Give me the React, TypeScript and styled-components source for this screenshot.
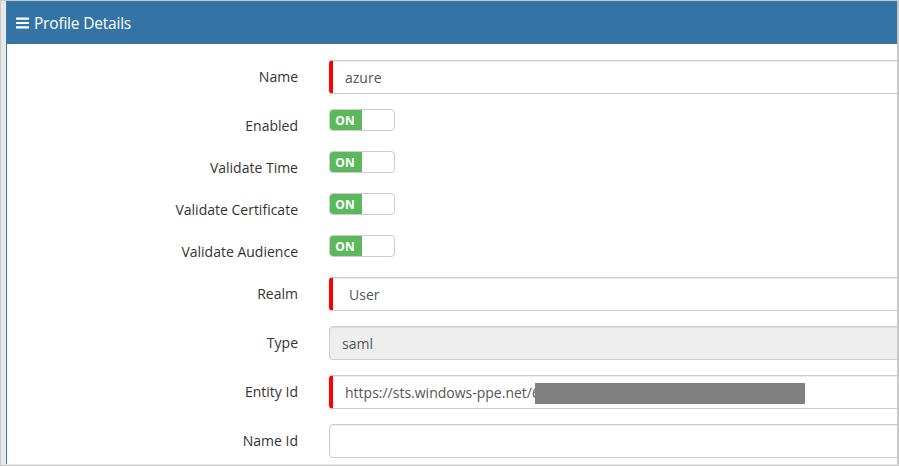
import { createGlobalStyle, styled } from "styled-components";

const GlobalStyle = createGlobalStyle`
  html, body {
    margin: 0;
    padding: 0;
    background: #ffffff;
  }
  body {
    font-family: "Open Sans", "Noto Sans", sans-serif;
    font-size: 14px;
    color: #333333;
  }
  * {
    box-sizing: border-box;
  }
`;

type Field =
  | { label: string; kind: "text"; value: string; required?: boolean; indent?: number; redacted?: boolean }
  | { label: string; kind: "readonly"; value: string }
  | { label: string; kind: "switch" };

const fields: Field[] = [
  { label: "Name", kind: "text", value: "azure", required: true },
  { label: "Enabled", kind: "switch" },
  { label: "Validate Time", kind: "switch" },
  { label: "Validate Certificate", kind: "switch" },
  { label: "Validate Audience", kind: "switch" },
  { label: "Realm", kind: "text", value: "User", required: true, indent: 4 },
  { label: "Type", kind: "readonly", value: "saml" },
  { label: "Entity Id", kind: "text", value: "https://sts.windows-ppe.net/6", required: true, redacted: true },
  { label: "Name Id", kind: "text", value: "" },
];

function BarsIcon() {
  return (
    <svg width="13" height="12" viewBox="0 0 13 12" fill="#ffffff">
      <rect x="0" y="0.5" width="13" height="2.2" rx="0.6" />
      <rect x="0" y="4.9" width="13" height="2.2" rx="0.6" />
      <rect x="0" y="9.3" width="13" height="2.2" rx="0.6" />
    </svg>
  );
}

export default function App() {
  return (
    <>
      <GlobalStyle />
      <Page>
        <Panel>
          <Heading>
            <BarsIcon />
            <HeadingTitle>Profile Details</HeadingTitle>
          </Heading>
          <Body>
            {fields.map((field) => (
              <Row key={field.label}>
                <Label>{field.label}</Label>
                <Control>
                  {field.kind === "switch" && (
                    <Switch>
                      <SwitchOn>ON</SwitchOn>
                    </Switch>
                  )}
                  {field.kind === "readonly" && <Input $readonly>{field.value}</Input>}
                  {field.kind === "text" && (
                    <Input $required={field.required} $indent={field.indent}>
                      {field.value}
                      {field.redacted && <Redaction />}
                    </Input>
                  )}
                </Control>
              </Row>
            ))}
          </Body>
        </Panel>
      </Page>
    </>
  );
}

const Page = styled.div`
  height: 466px;
  display: flex;
  background: #e9e9e9;
  border: 1px solid #c8c8c8;
  padding-left: 5px;
  padding-bottom: 1px;
`;

const Panel = styled.div`
  flex: 1;
  display: flex;
  flex-direction: column;
  background: #ffffff;
  border-left: 1px solid #337ab7;
  border-right: 1px solid #c8c8c8;
  overflow: hidden;
`;

const Heading = styled.div`
  height: 43px;
  flex-shrink: 0;
  display: flex;
  align-items: center;
  gap: 5px;
  padding: 0 9px;
  background: #3373a6;
  color: #ffffff;
`;

const HeadingTitle = styled.span`
  font-size: 15.5px;
  font-weight: 400;
  letter-spacing: -0.2px;
`;

const Body = styled.div`
  display: flex;
  flex-direction: column;
  gap: 15px;
  padding-top: 16px;
`;

const Row = styled.div`
  display: grid;
  grid-template-columns: 291px 640px;
  column-gap: 31px;
  align-items: start;
`;

const Label = styled.label`
  text-align: right;
  padding-top: 7px;
  line-height: 20px;
  font-size: 14px;
  color: #333333;
`;

const Control = styled.div`
  display: flex;
`;

const Input = styled.div<{ $required?: boolean; $readonly?: boolean; $indent?: number }>`
  position: relative;
  width: 100%;
  height: 34px;
  display: flex;
  align-items: center;
  padding-left: ${(p) => 12 + (p.$indent ?? 0)}px;
  border: 1px solid #cccccc;
  border-left: ${(p) => (p.$required ? "4px solid #ff0000" : "1px solid #cccccc")};
  border-radius: 4px;
  background: ${(p) => (p.$readonly ? "#eeeeee" : "#ffffff")};
  box-shadow: inset 0 1px 1px rgba(0, 0, 0, 0.075);
  color: #555555;
  font-size: 14px;
  white-space: nowrap;
`;

const Redaction = styled.span`
  position: absolute;
  left: 202px;
  top: 7px;
  width: 270px;
  height: 21px;
  background: #808080;
`;

const Switch = styled.div`
  width: 66px;
  height: 22px;
  display: flex;
  border: 1px solid #cccccc;
  border-radius: 4px;
  overflow: hidden;
  background: #ffffff;
`;

const SwitchOn = styled.span`
  width: 32px;
  display: flex;
  align-items: center;
  justify-content: center;
  background: #5cb85c;
  color: #ffffff;
  font-size: 12px;
  font-weight: 700;
  padding-right: 2px;
`;
